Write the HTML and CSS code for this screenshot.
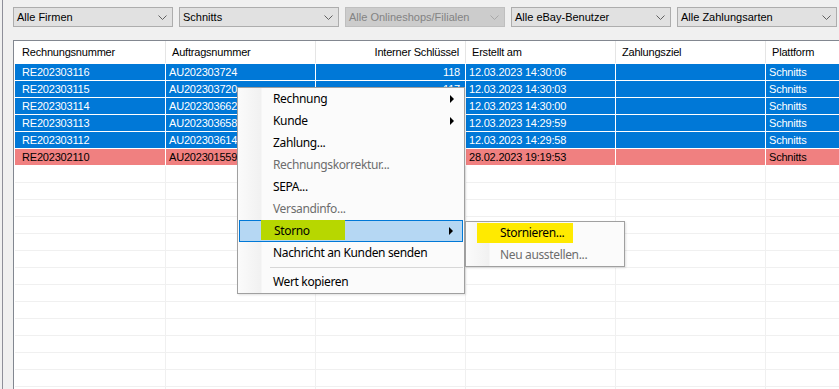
FILE: index.html
```html
<!DOCTYPE html>
<html lang="de">
<head>
    <meta charset="UTF-8">
    <title>Rechnungen</title>
    <link rel="stylesheet" href="styles.css">
</head>
<body>
    <div class="panel">
        <div class="filters">
            <div class="combo"><span>Alle Firmen</span><svg class="chev" width="9" height="5" viewBox="0 0 9 5"><path d="M0.5 0.5 L4.5 4.5 L8.5 0.5"/></svg></div>
            <div class="combo"><span>Schnitts</span><svg class="chev" width="9" height="5" viewBox="0 0 9 5"><path d="M0.5 0.5 L4.5 4.5 L8.5 0.5"/></svg></div>
            <div class="combo disabled"><span>Alle Onlineshops/Filialen</span><svg class="chev" width="9" height="5" viewBox="0 0 9 5"><path d="M0.5 0.5 L4.5 4.5 L8.5 0.5"/></svg></div>
            <div class="combo"><span>Alle eBay-Benutzer</span><svg class="chev" width="9" height="5" viewBox="0 0 9 5"><path d="M0.5 0.5 L4.5 4.5 L8.5 0.5"/></svg></div>
            <div class="combo"><span>Alle Zahlungsarten</span><svg class="chev" width="9" height="5" viewBox="0 0 9 5"><path d="M0.5 0.5 L4.5 4.5 L8.5 0.5"/></svg></div>
        </div>

        <div class="grid">
            <div class="row head">
                <div class="cell first">Rechnungsnummer</div>
                <div class="cell">Auftragsnummer</div>
                <div class="cell num">Interner Schlüssel</div>
                <div class="cell">Erstellt am</div>
                <div class="cell">Zahlungsziel</div>
                <div class="cell">Plattform</div>
            </div>
            <div class="row sel">
                <div class="cell first">RE202303116</div>
                <div class="cell">AU202303724</div>
                <div class="cell num">118</div>
                <div class="cell">12.03.2023 14:30:06</div>
                <div class="cell"></div>
                <div class="cell">Schnitts</div>
            </div>
            <div class="row sel">
                <div class="cell first">RE202303115</div>
                <div class="cell">AU202303720</div>
                <div class="cell num">117</div>
                <div class="cell">12.03.2023 14:30:03</div>
                <div class="cell"></div>
                <div class="cell">Schnitts</div>
            </div>
            <div class="row sel">
                <div class="cell first">RE202303114</div>
                <div class="cell">AU202303662</div>
                <div class="cell num">116</div>
                <div class="cell">12.03.2023 14:30:00</div>
                <div class="cell"></div>
                <div class="cell">Schnitts</div>
            </div>
            <div class="row sel">
                <div class="cell first">RE202303113</div>
                <div class="cell">AU202303658</div>
                <div class="cell num">115</div>
                <div class="cell">12.03.2023 14:29:59</div>
                <div class="cell"></div>
                <div class="cell">Schnitts</div>
            </div>
            <div class="row sel">
                <div class="cell first">RE202303112</div>
                <div class="cell">AU202303614</div>
                <div class="cell num">114</div>
                <div class="cell">12.03.2023 14:29:58</div>
                <div class="cell"></div>
                <div class="cell">Schnitts</div>
            </div>
            <div class="row warn">
                <div class="cell first">RE202302110</div>
                <div class="cell">AU202301559</div>
                <div class="cell num">110</div>
                <div class="cell">28.02.2023 19:19:53</div>
                <div class="cell"></div>
                <div class="cell">Schnitts</div>
            </div>
            <div class="row"><div class="cell first"></div><div class="cell"></div><div class="cell"></div><div class="cell"></div><div class="cell"></div><div class="cell"></div></div>
            <div class="row"><div class="cell first"></div><div class="cell"></div><div class="cell"></div><div class="cell"></div><div class="cell"></div><div class="cell"></div></div>
            <div class="row"><div class="cell first"></div><div class="cell"></div><div class="cell"></div><div class="cell"></div><div class="cell"></div><div class="cell"></div></div>
            <div class="row"><div class="cell first"></div><div class="cell"></div><div class="cell"></div><div class="cell"></div><div class="cell"></div><div class="cell"></div></div>
            <div class="row"><div class="cell first"></div><div class="cell"></div><div class="cell"></div><div class="cell"></div><div class="cell"></div><div class="cell"></div></div>
            <div class="row"><div class="cell first"></div><div class="cell"></div><div class="cell"></div><div class="cell"></div><div class="cell"></div><div class="cell"></div></div>
            <div class="row"><div class="cell first"></div><div class="cell"></div><div class="cell"></div><div class="cell"></div><div class="cell"></div><div class="cell"></div></div>
            <div class="row"><div class="cell first"></div><div class="cell"></div><div class="cell"></div><div class="cell"></div><div class="cell"></div><div class="cell"></div></div>
            <div class="row"><div class="cell first"></div><div class="cell"></div><div class="cell"></div><div class="cell"></div><div class="cell"></div><div class="cell"></div></div>
            <div class="row"><div class="cell first"></div><div class="cell"></div><div class="cell"></div><div class="cell"></div><div class="cell"></div><div class="cell"></div></div>
            <div class="row"><div class="cell first"></div><div class="cell"></div><div class="cell"></div><div class="cell"></div><div class="cell"></div><div class="cell"></div></div>
            <div class="row"><div class="cell first"></div><div class="cell"></div><div class="cell"></div><div class="cell"></div><div class="cell"></div><div class="cell"></div></div>
            <div class="row"><div class="cell first"></div><div class="cell"></div><div class="cell"></div><div class="cell"></div><div class="cell"></div><div class="cell"></div></div>
            <div class="row"><div class="cell first"></div><div class="cell"></div><div class="cell"></div><div class="cell"></div><div class="cell"></div><div class="cell"></div></div>
        </div>
    </div>

    <!-- context menu -->
    <div class="menu ctx">
        <div class="item">Rechnung<span class="arrow"></span></div>
        <div class="item">Kunde<span class="arrow"></span></div>
        <div class="item">Zahlung...</div>
        <div class="item off">Rechnungskorrektur...</div>
        <div class="item">SEPA...</div>
        <div class="item off">Versandinfo...</div>
        <div class="item hover"><span class="mark green"></span><span class="label">Storno</span><span class="arrow"></span></div>
        <div class="item">Nachricht an Kunden senden</div>
        <div class="sep"></div>
        <div class="item">Wert kopieren</div>
    </div>

    <div class="menu sub">
        <div class="item"><span class="mark yellow"></span><span class="label">Stornieren...</span></div>
        <div class="item off">Neu ausstellen...</div>
    </div>
</body>
</html>
```

FILE: styles.css
```css
body {
    margin: 0;
    width: 839px;
    height: 389px;
    overflow: hidden;
    background: #f0f0f0;
    font-family: "Liberation Sans", Arial, sans-serif;
    font-size: 11px;
    color: #000;
    position: relative;
}
.panel {
    margin-left: 2px;
    border-left: 1px solid #8e8f99;
    height: 389px;
    padding-left: 10px;
}
.filters {
    display: flex;
    gap: 6px;
    padding-top: 7px;
}
.combo {
    flex: none;
    width: 160px;
    height: 20px;
    box-sizing: border-box;
    border: 1px solid #adadad;
    background: #e1e1e1;
    display: flex;
    align-items: center;
    justify-content: space-between;
    padding: 0 5px 0 3px;
}
.chev {
    fill: none;
    stroke: #606060;
    stroke-width: 1;
}
.combo.disabled {
    background: #cccccc;
    border-color: #bfbfbf;
    color: #838383;
}
.combo.disabled .chev {
    stroke: #a8a8a8;
}
.grid {
    margin-top: 13px;
    width: 1000px;
    border: 1px solid #828790;
    background: #fff;
    padding-left: 1px;
}
.row {
    display: flex;
    height: 17px;
    box-sizing: border-box;
    border-bottom: 1px solid #f0f0f0;
    line-height: 16px;
}
.cell {
    flex: none;
    width: 150px;
    box-sizing: border-box;
    border-right: 1px solid #f0f0f0;
    padding: 0 5px 0 3px;
    white-space: nowrap;
    overflow: hidden;
    letter-spacing: -0.2px;
}
.cell.first {
    width: 151px;
    padding-left: 7px;
}
.cell.num {
    text-align: right;
}
.row.head {
    height: 23px;
    line-height: 22px;
    border-bottom: 1px solid #fff;
}
.row.head .cell {
    border-right-color: #e5e5e5;
    padding-left: 6px;
}
.row.head .cell.first {
    padding-left: 7px;
}
.row.head .cell.num {
    padding-right: 6px;
}
.row.sel {
    border-bottom-color: #fff;
}
.row.sel .cell {
    background: #0078d7;
    color: #fff;
    border-right-color: #fff;
}
.row.warn {
    border-bottom-color: #fff;
}
.row.warn .cell {
    background: #f08080;
    border-right-color: #fff;
}

/* menus */
.menu {
    position: absolute;
    box-sizing: border-box;
    border: 1px solid #a0a0a0;
    background: linear-gradient(to right, #fbfbfb 0, #f1f1f1 23px, #fbfbfb 24px, #fbfbfb 100%);
    font-family: "Noto Sans", sans-serif;
    font-size: 12px;
    letter-spacing: -0.35px;
    box-shadow: 1px 1px 2px rgba(0,0,0,0.12);
}
.ctx {
    left: 237px;
    top: 87px;
    width: 228px;
}
.sub {
    left: 465px;
    top: 221px;
    width: 160px;
}
.item {
    position: relative;
    height: 22px;
    line-height: 22px;
    padding-left: 35px;
    box-sizing: border-box;
    white-space: nowrap;
}
.sub .item {
    padding-left: 34px;
}
.item.off {
    color: #6d6d6d;
}
.item.hover {
    margin: 0 1px;
    padding-left: 34px;
    background: #b5d7f3;
    border: 1px solid #0078d7;
    line-height: 20px;
}
.label {
    position: relative;
}
.arrow {
    position: absolute;
    right: 10px;
    top: 7px;
    width: 0;
    height: 0;
    border-top: 4px solid transparent;
    border-bottom: 4px solid transparent;
    border-left: 4px solid #000;
}
.item.hover .arrow {
    right: 9px;
    top: 6px;
}
.mark {
    position: absolute;
}
.mark.green {
    left: 21px;
    top: -1px;
    width: 84px;
    height: 20px;
    background: #b7d700;
}
.mark.yellow {
    left: 11px;
    top: 1px;
    width: 96px;
    height: 20px;
    background: #ffea00;
}
.sep {
    height: 7px;
    margin-left: 32px;
    margin-right: 1px;
    background: linear-gradient(#d7d7d7, #d7d7d7) 0 3px / 100% 1px no-repeat;
}
```
